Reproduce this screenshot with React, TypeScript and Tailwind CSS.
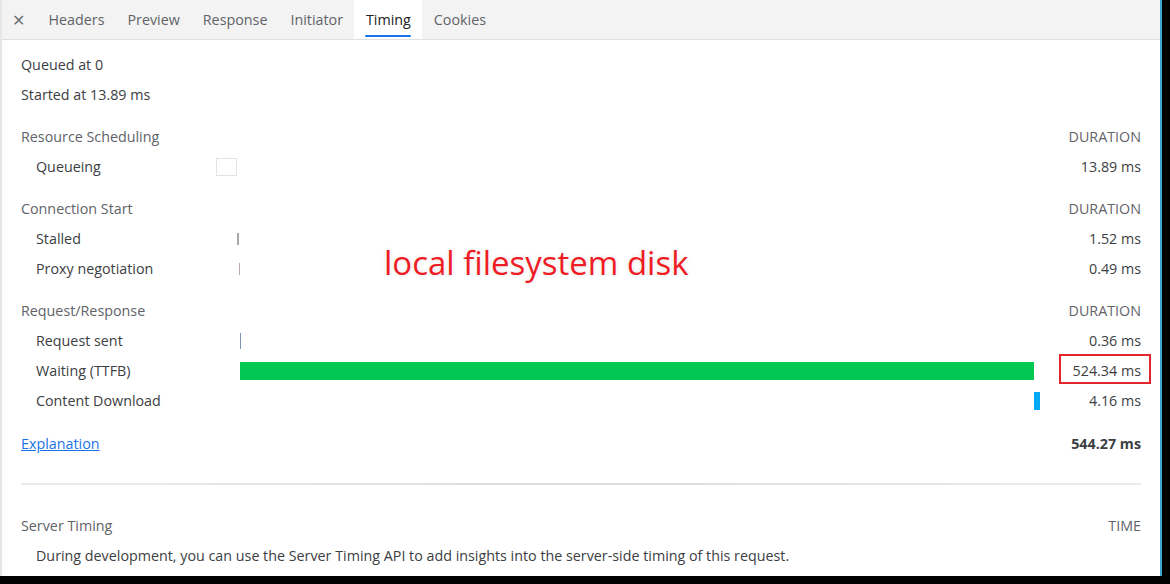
import React from 'react';

const tabs = ['Headers', 'Preview', 'Response', 'Initiator', 'Timing', 'Cookies'];

type Row = {
  label: string;
  value: string;
  bar?: React.ReactNode;
  boxed?: boolean;
};

const Section = ({ title, rows }: { title: string; rows: Row[] }) => (
  <div className="mt-3">
    <div className="grid grid-cols-[195px_825px_1fr] h-[30px] items-center">
      <span className="text-[#5f6368]">{title}</span>
      <span />
      <span className="text-right text-[#5f6368]">DURATION</span>
    </div>
    {rows.map((r) => (
      <div key={r.label} className="grid grid-cols-[195px_825px_1fr] h-[30px] items-center">
        <span className="pl-[15px] text-[#3c4043]">{r.label}</span>
        <div className="h-full flex items-center">{r.bar}</div>
        <span className="relative text-right text-[#3c4043]">
          {r.value}
          {r.boxed && (
            <span className="absolute right-[-10px] top-[-6px] w-[92px] h-[30px] border-2 border-[#e3262e]" />
          )}
        </span>
      </div>
    ))}
  </div>
);

export default function App() {
  return (
    <div className="w-[1170px] h-[584px] bg-black overflow-hidden" style={{ fontFamily: '"Open Sans", "Noto Sans", sans-serif' }}>
      <div className="w-[1162px] h-[576px] bg-white border-l-2 border-l-[#e6e6e6] border-r-2 border-r-[#3aa6cf] flex flex-col text-[14.3px]">
        {/* tab strip */}
        <div className="h-[40px] bg-[#f3f3f3] border-b border-[#e0e0e0] flex items-stretch shrink-0">
          <span className="w-[35px] pl-[10px] flex items-center text-[#6f7377] text-[16px]">✕</span>
          {tabs.map((t) => (
            <div
              key={t}
              className={
                t === 'Timing'
                  ? 'relative px-[11.5px] flex items-center bg-white text-[#202124]'
                  : 'px-[11.5px] flex items-center text-[#5f6368]'
              }
            >
              {t}
              {t === 'Timing' && (
                <span className="absolute left-[11px] right-[11px] bottom-[2px] h-[2px] bg-[#1a73e8] rounded" />
              )}
            </div>
          ))}
        </div>

        <div className="relative flex-1 pl-[19px] pr-[19px] pt-[10px]">
          <div className="h-[30px] flex items-center text-[#3c4043]">Queued at 0</div>
          <div className="h-[30px] flex items-center text-[#3c4043]">Started at 13.89 ms</div>

          <Section
            title="Resource Scheduling"
            rows={[
              {
                label: 'Queueing',
                value: '13.89 ms',
                bar: <div className="w-[21px] h-[18px] border border-[#e4e4e4]" />,
              },
            ]}
          />
          <Section
            title="Connection Start"
            rows={[
              { label: 'Stalled', value: '1.52 ms', bar: <div className="ml-[21px] w-[2px] h-[12px] bg-[#a8a8a8]" /> },
              { label: 'Proxy negotiation', value: '0.49 ms', bar: <div className="ml-[23px] w-[1px] h-[12px] bg-[#b9a8a8]" /> },
            ]}
          />
          <Section
            title="Request/Response"
            rows={[
              { label: 'Request sent', value: '0.36 ms', bar: <div className="ml-[24px] w-[1px] h-[16px] bg-[#7f96b2]" /> },
              {
                label: 'Waiting (TTFB)',
                value: '524.34 ms',
                boxed: true,
                bar: <div className="ml-[24px] w-[794px] h-[18px] bg-[#00c853]" />,
              },
              { label: 'Content Download', value: '4.16 ms', bar: <div className="ml-[818px] w-[6px] h-[18px] bg-[#03a9f4]" /> },
            ]}
          />

          <div className="mt-[13px] h-[30px] flex items-center justify-between">
            <a className="text-[#1a73e8] underline">Explanation</a>
            <span className="font-bold text-[#3c4043]">544.27 ms</span>
          </div>

          <div className="mt-[24px] h-[2px] bg-gradient-to-r from-[#ececec] via-[#dcdcdc] to-[#ececec]" />

          <div className="mt-[26px] h-[30px] flex items-center justify-between text-[#5f6368]">
            <span>Server Timing</span>
            <span>TIME</span>
          </div>
          <div className="h-[30px] flex items-center pl-[15px] text-[#3c4043]">
            During development, you can use the Server Timing API to add insights into the server-side timing of this request.
          </div>

          <span
            className="absolute left-[382px] top-[206px] text-[33px] text-[#ee1c25] leading-none"
            style={{ textShadow: '0 0 3px #fff, 0 0 4px #d9d9d9' }}
          >
            local filesystem disk
          </span>
        </div>
      </div>
    </div>
  );
}
